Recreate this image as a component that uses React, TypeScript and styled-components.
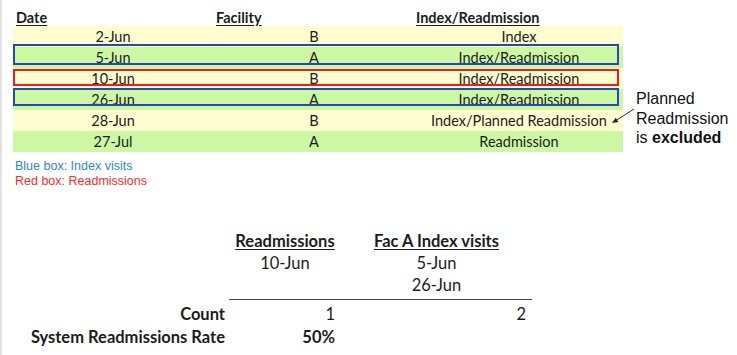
import styled, { createGlobalStyle } from "styled-components";

const GlobalStyle = createGlobalStyle`
    body {
        margin: 0;
        background: #ffffff;
        font-family: Lato, "Open Sans", sans-serif;
        color: #1c1c1c;
    }
`;

type BoxKind = "blue" | "red";

interface Visit {
    date: string;
    facility: string;
    kind: string;
    shade: "yellow" | "green";
    box?: BoxKind;
    boxTop?: number;
    boxBottom?: number;
}

const visits: Visit[] = [
    { date: "2-Jun", facility: "B", kind: "Index", shade: "yellow" },
    { date: "5-Jun", facility: "A", kind: "Index/Readmission", shade: "green", box: "blue", boxTop: -3, boxBottom: 3 },
    { date: "10-Jun", facility: "B", kind: "Index/Readmission", shade: "yellow", box: "red", boxTop: 1, boxBottom: 3 },
    { date: "26-Jun", facility: "A", kind: "Index/Readmission", shade: "green", box: "blue", boxTop: -1, boxBottom: 4 },
    { date: "28-Jun", facility: "B", kind: "Index/Planned Readmission", shade: "yellow" },
    { date: "27-Jul", facility: "A", kind: "Readmission", shade: "green" },
];

export default function App() {
    return (
        <Page>
            <GlobalStyle />
            <TopSection>
                <Sheet>
                    <HeaderRow>
                        <HeadCell $indent={3}>Date</HeadCell>
                        <HeadCell $indent={3}>Facility</HeadCell>
                        <HeadCell $indent={1}>Index/Readmission</HeadCell>
                    </HeaderRow>
                    {visits.map((v) => (
                        <Row
                            key={v.date}
                            $shade={v.shade}
                            $box={v.box}
                            $boxTop={v.boxTop ?? 0}
                            $boxBottom={v.boxBottom ?? 0}
                        >
                            <Cell>{v.date}</Cell>
                            <Cell>{v.facility}</Cell>
                            <Cell>{v.kind}</Cell>
                        </Row>
                    ))}
                </Sheet>
                <Note>
                    Planned
                    <br />
                    Readmission
                    <br />
                    is <b>excluded</b>
                </Note>
                <Arrow width="32" height="24" viewBox="0 0 32 24">
                    <line x1="28" y1="5" x2="10" y2="16.5" stroke="#333" strokeWidth="1" />
                    <polygon points="6,19 12.4,17.9 9.7,13.7" fill="#222" />
                </Arrow>
            </TopSection>

            <Legend>
                <LegendLine $color="#2f86cf">Blue box: Index visits</LegendLine>
                <LegendLine $color="#ff2b2b">Red box: Readmissions</LegendLine>
            </Legend>

            <Summary>
                <Label />
                <SumHead>Readmissions</SumHead>
                <SumHead>Fac A Index visits</SumHead>

                <Label />
                <SumCell>10-Jun</SumCell>
                <SumCell>5-Jun</SumCell>

                <Label />
                <SumCell />
                <SumCell>26-Jun</SumCell>

                <Label />
                <Rule />

                <Label>Count</Label>
                <SumCell $right>1</SumCell>
                <SumCell $right>2</SumCell>

                <Label>System Readmissions Rate</Label>
                <SumCell $right $bold>50%</SumCell>
                <SumCell />
            </Summary>
        </Page>
    );
}

const Page = styled.div`
    min-height: 355px;
    box-sizing: border-box;
    border-left: 2px solid #e2e2e2;
    padding-top: 8px;
`;

const TopSection = styled.div`
    position: relative;
    display: flex;
    align-items: flex-start;
`;

const Sheet = styled.div`
    margin-left: 11px;
    width: 610px;
`;

const HeaderRow = styled.div`
    display: grid;
    grid-template-columns: 200px 202px 208px;
    height: 18px;
    align-items: center;
`;

const HeadCell = styled.div<{ $indent: number }>`
    padding-left: ${(p) => p.$indent}px;
    font-size: 14.5px;
    font-weight: 700;
    text-decoration: underline;
    text-underline-offset: 2px;
`;

const Row = styled.div<{ $shade: "yellow" | "green"; $box?: BoxKind; $boxTop: number; $boxBottom: number }>`
    position: relative;
    display: grid;
    grid-template-columns: 200px 202px 208px;
    height: 21px;
    align-items: center;
    background: ${(p) => (p.$shade === "yellow" ? "#fefdd0" : "#cdf8a3")};

    &::after {
        content: "";
        display: ${(p) => (p.$box ? "block" : "none")};
        position: absolute;
        left: 0;
        right: 4px;
        top: ${(p) => p.$boxTop}px;
        bottom: ${(p) => p.$boxBottom}px;
        border: 2px solid ${(p) => (p.$box === "red" ? "#ee1c1c" : "#2846b8")};
    }
`;

const Cell = styled.div`
    text-align: center;
    font-size: 14.5px;
`;

const Note = styled.div`
    margin-top: 81px;
    margin-left: 13px;
    font-family: "Liberation Sans", Arial, sans-serif;
    font-size: 16px;
    line-height: 19.5px;
    color: #111;

    b {
        font-weight: 700;
    }
`;

const Arrow = styled.svg`
    position: absolute;
    left: 604px;
    top: 96px;
`;

const Legend = styled.div`
    margin: 7px 0 0 13px;
    font-family: "Liberation Sans", Arial, sans-serif;
    font-size: 12.5px;
    line-height: 14.5px;
`;

const LegendLine = styled.div<{ $color: string }>`
    color: ${(p) => p.$color};
`;

const Summary = styled.div`
    margin-top: 42px;
    display: grid;
    grid-template-columns: 227px 112px 191px;
    grid-template-rows: 22px 22px 22px 6px 23px 23px;
    align-items: center;
    font-size: 16.5px;
`;

const Label = styled.div`
    text-align: right;
    padding-right: 4px;
    font-weight: 700;
    white-space: nowrap;
`;

const SumHead = styled.div`
    text-align: center;
    font-weight: 700;
    text-decoration: underline;
    text-underline-offset: 2px;
`;

const SumCell = styled.div<{ $right?: boolean; $bold?: boolean }>`
    text-align: ${(p) => (p.$right ? "right" : "center")};
    padding-right: ${(p) => (p.$right ? "6px" : "0")};
    font-weight: ${(p) => (p.$bold ? 700 : 400)};
`;

const Rule = styled.div`
    grid-column: 2 / span 2;
    height: 1px;
    background: #444;
`;
